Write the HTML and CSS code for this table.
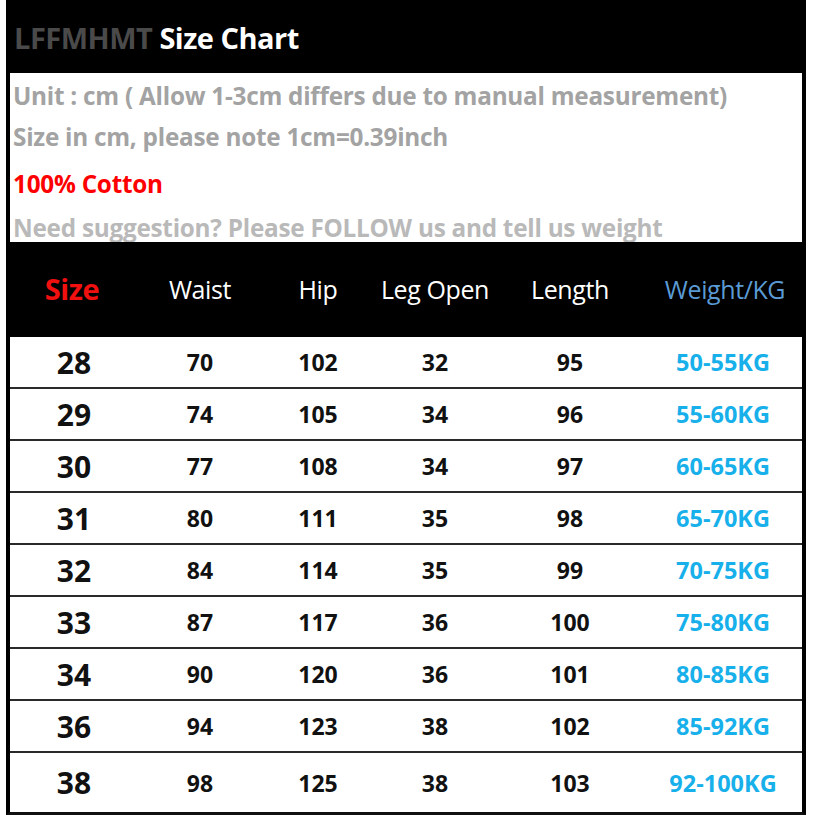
FILE: index.html
```html
<!DOCTYPE html>
<html>
<head>
<meta charset="utf-8">
<link rel="stylesheet" href="styles.css">
</head>
<body>
<div class="chart">
  <div class="title"><span class="brand">LFFMHMT</span> <span class="name">Size Chart</span></div>
  <div class="info">
    <div class="line l1">Unit : cm ( Allow 1-3cm differs due to manual measurement)</div>
    <div class="line l2">Size in cm, please note 1cm=0.39inch</div>
    <div class="line l3">100% Cotton</div>
    <div class="line l4">Need suggestion? Please FOLLOW us and tell us weight</div>
  </div>
  <div class="thead">
    <div class="c size">Size</div>
    <div class="c">Waist</div>
    <div class="c">Hip</div>
    <div class="c">Leg Open</div>
    <div class="c">Length</div>
    <div class="c weight">Weight/KG</div>
  </div>
  <div class="rows">
    <div class="row"><div class="c size">28</div><div class="c">70</div><div class="c">102</div><div class="c">32</div><div class="c">95</div><div class="c weight">50-55KG</div></div>
    <div class="row"><div class="c size">29</div><div class="c">74</div><div class="c">105</div><div class="c">34</div><div class="c">96</div><div class="c weight">55-60KG</div></div>
    <div class="row"><div class="c size">30</div><div class="c">77</div><div class="c">108</div><div class="c">34</div><div class="c">97</div><div class="c weight">60-65KG</div></div>
    <div class="row"><div class="c size">31</div><div class="c">80</div><div class="c">111</div><div class="c">35</div><div class="c">98</div><div class="c weight">65-70KG</div></div>
    <div class="row"><div class="c size">32</div><div class="c">84</div><div class="c">114</div><div class="c">35</div><div class="c">99</div><div class="c weight">70-75KG</div></div>
    <div class="row"><div class="c size">33</div><div class="c">87</div><div class="c">117</div><div class="c">36</div><div class="c">100</div><div class="c weight">75-80KG</div></div>
    <div class="row"><div class="c size">34</div><div class="c">90</div><div class="c">120</div><div class="c">36</div><div class="c">101</div><div class="c weight">80-85KG</div></div>
    <div class="row"><div class="c size">36</div><div class="c">94</div><div class="c">123</div><div class="c">38</div><div class="c">102</div><div class="c weight">85-92KG</div></div>
    <div class="row last"><div class="c size">38</div><div class="c">98</div><div class="c">125</div><div class="c">38</div><div class="c">103</div><div class="c weight">92-100KG</div></div>
  </div>
</div>
</body>
</html>
```
FILE: styles.css
```css
* { box-sizing: border-box; }
html, body { margin: 0; padding: 0; background: #fff; }
body { font-family: "Open Sans", "Noto Sans", sans-serif; }

.chart {
  margin-left: 6px;
  width: 800px;
  display: flex;
  flex-direction: column;
}

.title {
  background: #000;
  height: 73px;
  padding-left: 8px;
  display: flex;
  align-items: center;
  gap: 7px;
  font-weight: 700;
  font-size: 29px;
  letter-spacing: -0.5px;
  padding-top: 1px;
}
.title .brand { color: #4a4a4a; }
.title .name { color: #fff; }

.info {
  background: #fff;
  border-left: 4px solid #000;
  border-right: 4px solid #000;
  padding-left: 3px;
  font-weight: 700;
  font-size: 24.3px;
  letter-spacing: -0.25px;
  color: #a3a3a3;
}
.line { white-space: nowrap; }
.l1 { height: 46px; line-height: 46px; }
.l2 { height: 36px; line-height: 36px; }
.l3 { height: 58px; line-height: 58px; color: #f00; }
.l4 { height: 29px; line-height: 29px; color: #b9b9b9; }

.thead {
  background: #000;
  height: 95px;
  display: grid;
  grid-template-columns: 132px 124px 112px 122px 148px 162px;
  align-items: center;
  color: #fff;
  font-size: 25px;
  letter-spacing: -0.4px;
  padding-bottom: 2px;
}
.c { text-align: center; white-space: nowrap; }
.thead .size { color: #f01010; font-weight: 700; font-size: 29px; }
.thead .weight { color: #5b9bd5; }

.rows {
  border-left: 4px solid #000;
  border-right: 4px solid #000;
  border-bottom: 3px solid #111;
}
.row {
  height: 52px;
  border-bottom: 2px solid #2a2a2a;
  display: grid;
  grid-template-columns: 128px 124px 112px 122px 148px 158px;
  align-items: center;
  font-weight: 700;
  font-size: 23px;
  color: #111;
}
.row.last { height: 59px; border-bottom: 0; }
.row .size { font-size: 30px; }
.row .weight { color: #18b0ea; font-size: 23.5px; }
```
